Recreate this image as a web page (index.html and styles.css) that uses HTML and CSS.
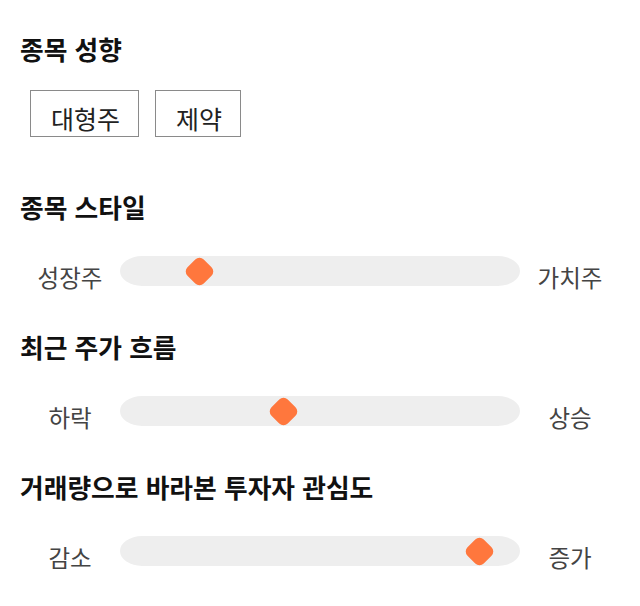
FILE: index.html
```html
<!DOCTYPE html>
<html lang="ko">
<head>
<meta charset="utf-8">
<title>종목 성향</title>
<link rel="stylesheet" href="styles.css">
</head>
<body>
<main class="page">
  <section class="section">
    <h2 class="title">종목 성향</h2>
    <div class="chips">
      <span class="chip">대형주</span>
      <span class="chip">제약</span>
    </div>
  </section>

  <section class="section">
    <h2 class="title">종목 스타일</h2>
    <div class="slider">
      <span class="label">성장주</span>
      <div class="track"><span class="thumb" style="left: 19.75%"></span></div>
      <span class="label">가치주</span>
    </div>
  </section>

  <section class="section">
    <h2 class="title">최근 주가 흐름</h2>
    <div class="slider">
      <span class="label">하락</span>
      <div class="track"><span class="thumb" style="left: 40.75%"></span></div>
      <span class="label">상승</span>
    </div>
  </section>

  <section class="section">
    <h2 class="title">거래량으로 바라본 투자자 관심도</h2>
    <div class="slider">
      <span class="label">감소</span>
      <div class="track"><span class="thumb" style="left: 89.75%"></span></div>
      <span class="label">증가</span>
    </div>
  </section>
</main>
</body>
</html>
```

FILE: styles.css
```css
* { box-sizing: border-box; }

html, body {
  margin: 0;
  background: #ffffff;
}

body {
  font-family: "Noto Sans CJK KR", "Noto Sans", sans-serif;
  color: #222222;
}

.page {
  padding: 33px 20px 0;
}

.section + .section {
  margin-top: 40px;
}

.section:nth-child(2) {
  margin-top: 54px;
}

.title {
  margin: 0;
  font-size: 25.75px;
  line-height: 32px;
  font-weight: 700;
  color: #111111;
}

.chips {
  display: flex;
  gap: 16px;
  margin-top: 25px;
  padding-left: 10px;
}

.chip {
  display: flex;
  align-items: center;
  height: 47px;
  padding: 8px 18px 0 20px;
  border: 1px solid #8a8a8a;
  font-size: 25px;
  color: #222222;
}

.slider {
  display: grid;
  grid-template-columns: 100px 400px 100px;
  grid-template-rows: 40px;
  align-items: center;
  margin-top: 28px;
}

.label {
  height: 40px;
  padding-top: 12px;
  text-align: center;
  font-size: 23.5px;
  line-height: 28px;
  color: #444444;
}

.track {
  position: relative;
  height: 30px;
  background: #eeeeee;
  border-radius: 22px / 15px;
}

.thumb {
  position: absolute;
  top: 50%;
  width: 23px;
  height: 23px;
  margin: -11.5px 0 0 -11.5px;
  background: #ff773d;
  border-radius: 6px;
  transform: rotate(45deg);
}
```
